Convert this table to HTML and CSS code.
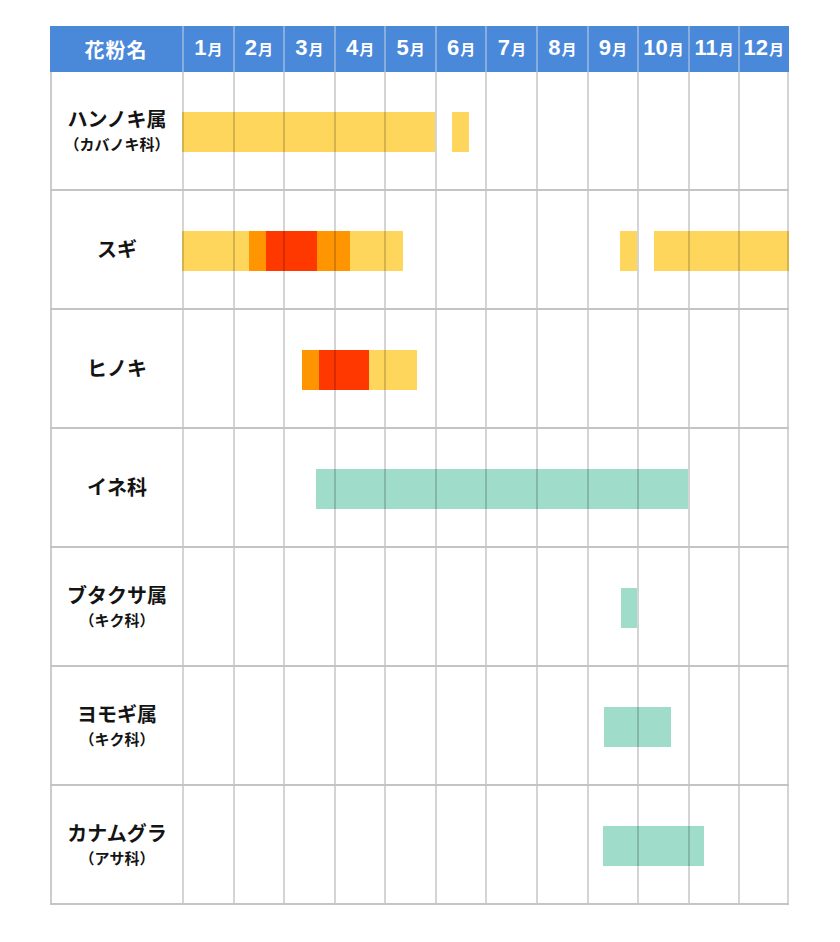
FILE: index.html
```html
<!DOCTYPE html>
<html lang="ja">
<head>
<meta charset="utf-8">
<title>花粉カレンダー</title>
<link rel="stylesheet" href="styles.css">
</head>
<body>
<div class="chart">
  <div class="row head">
    <div class="name">花粉名</div>
    <div class="months">
      <div class="m">1<span class="tsuki">月</span></div>
      <div class="m">2<span class="tsuki">月</span></div>
      <div class="m">3<span class="tsuki">月</span></div>
      <div class="m">4<span class="tsuki">月</span></div>
      <div class="m">5<span class="tsuki">月</span></div>
      <div class="m">6<span class="tsuki">月</span></div>
      <div class="m">7<span class="tsuki">月</span></div>
      <div class="m">8<span class="tsuki">月</span></div>
      <div class="m">9<span class="tsuki">月</span></div>
      <div class="m">10<span class="tsuki">月</span></div>
      <div class="m">11<span class="tsuki">月</span></div>
      <div class="m">12<span class="tsuki">月</span></div>
    </div>
  </div>

  <div class="row body">
    <div class="name"><span class="main">ハンノキ属</span><span class="sub">（カバノキ科）</span></div>
    <div class="months">
      <div class="bars">
        <div class="bar y" style="left:0%;width:41.67%"></div>
        <div class="bar y" style="left:44.5%;width:2.8%"></div>
      </div>
      <div class="c"></div><div class="c"></div><div class="c"></div><div class="c"></div><div class="c"></div><div class="c"></div>
      <div class="c"></div><div class="c"></div><div class="c"></div><div class="c"></div><div class="c"></div><div class="c"></div>
    </div>
  </div>

  <div class="row body">
    <div class="name"><span class="main">スギ</span></div>
    <div class="months">
      <div class="bars">
        <div class="bar y" style="left:0%;width:11.0%"></div>
        <div class="bar o" style="left:11.0%;width:2.8%"></div>
        <div class="bar r" style="left:13.8%;width:8.45%"></div>
        <div class="bar o" style="left:22.25%;width:5.45%"></div>
        <div class="bar y" style="left:27.7%;width:8.75%"></div>
        <div class="bar y" style="left:72.2%;width:2.8%"></div>
        <div class="bar y" style="left:77.8%;width:22.2%"></div>
      </div>
      <div class="c"></div><div class="c"></div><div class="c"></div><div class="c"></div><div class="c"></div><div class="c"></div>
      <div class="c"></div><div class="c"></div><div class="c"></div><div class="c"></div><div class="c"></div><div class="c"></div>
    </div>
  </div>

  <div class="row body">
    <div class="name"><span class="main">ヒノキ</span></div>
    <div class="months">
      <div class="bars">
        <div class="bar o" style="left:19.85%;width:2.75%"></div>
        <div class="bar r" style="left:22.6%;width:8.25%"></div>
        <div class="bar y" style="left:30.85%;width:7.9%"></div>
      </div>
      <div class="c"></div><div class="c"></div><div class="c"></div><div class="c"></div><div class="c"></div><div class="c"></div>
      <div class="c"></div><div class="c"></div><div class="c"></div><div class="c"></div><div class="c"></div><div class="c"></div>
    </div>
  </div>

  <div class="row body">
    <div class="name"><span class="main">イネ科</span></div>
    <div class="months">
      <div class="bars">
        <div class="bar g" style="left:22.1%;width:61.23%"></div>
      </div>
      <div class="c"></div><div class="c"></div><div class="c"></div><div class="c"></div><div class="c"></div><div class="c"></div>
      <div class="c"></div><div class="c"></div><div class="c"></div><div class="c"></div><div class="c"></div><div class="c"></div>
    </div>
  </div>

  <div class="row body">
    <div class="name"><span class="main">ブタクサ属</span><span class="sub">（キク科）</span></div>
    <div class="months">
      <div class="bars">
        <div class="bar g" style="left:72.3%;width:2.7%"></div>
      </div>
      <div class="c"></div><div class="c"></div><div class="c"></div><div class="c"></div><div class="c"></div><div class="c"></div>
      <div class="c"></div><div class="c"></div><div class="c"></div><div class="c"></div><div class="c"></div><div class="c"></div>
    </div>
  </div>

  <div class="row body">
    <div class="name"><span class="main">ヨモギ属</span><span class="sub">（キク科）</span></div>
    <div class="months">
      <div class="bars">
        <div class="bar g" style="left:69.5%;width:11.0%"></div>
      </div>
      <div class="c"></div><div class="c"></div><div class="c"></div><div class="c"></div><div class="c"></div><div class="c"></div>
      <div class="c"></div><div class="c"></div><div class="c"></div><div class="c"></div><div class="c"></div><div class="c"></div>
    </div>
  </div>

  <div class="row body">
    <div class="name"><span class="main">カナムグラ</span><span class="sub">（アサ科）</span></div>
    <div class="months">
      <div class="bars">
        <div class="bar g" style="left:69.35%;width:16.65%"></div>
      </div>
      <div class="c"></div><div class="c"></div><div class="c"></div><div class="c"></div><div class="c"></div><div class="c"></div>
      <div class="c"></div><div class="c"></div><div class="c"></div><div class="c"></div><div class="c"></div><div class="c"></div>
    </div>
  </div>
</div>
</body>
</html>
```

FILE: styles.css
```css
html, body {
  margin: 0;
  padding: 0;
  background: #ffffff;
}

body {
  padding: 26px 0 0 50px;
  font-family: "Noto Sans CJK JP", "Noto Sans", sans-serif;
  color: #141414;
}

.chart {
  width: 739px;
}

.row {
  display: grid;
  grid-template-columns: 132px 607px;
}

.head {
  height: 46px;
  background: #4a88da;
  color: #ffffff;
}

.head .name {
  display: flex;
  align-items: center;
  justify-content: center;
  font-size: 20px;
  font-weight: 700;
  letter-spacing: 1px;
}

.months {
  position: relative;
  display: grid;
  grid-template-columns: repeat(12, 1fr);
}

.head .m {
  box-sizing: border-box;
  border-left: 2px solid rgba(190, 205, 225, 0.55);
  display: flex;
  align-items: baseline;
  justify-content: center;
  font-family: "Liberation Sans", "Noto Sans", sans-serif;
  font-weight: 700;
  font-size: 22px;
  line-height: 44px;
  white-space: nowrap;
}

.head .m:last-child {
  border-right: 2px solid #4a88da;
}

.tsuki {
  font-family: "Noto Sans CJK JP", sans-serif;
  font-size: 15px;
  font-weight: 700;
  line-height: 20px;
  margin-left: 1px;
}

.body {
  height: 119px;
  box-sizing: border-box;
  border-bottom: 2px solid #c4c4c4;
}

.body .name {
  box-sizing: border-box;
  border-left: 2px solid #cccccc;
  display: flex;
  flex-direction: column;
  align-items: center;
  justify-content: center;
  font-weight: 700;
  padding-bottom: 2px;
}

.main {
  font-size: 20px;
  line-height: 28px;
}

.sub {
  font-size: 15px;
  line-height: 21px;
}

.bars {
  position: absolute;
  inset: 0;
  z-index: 0;
}

.bar {
  position: absolute;
  top: 40px;
  height: 40px;
}

.bar.y { background: #ffd65c; }
.bar.o { background: #ff9500; }
.bar.r { background: #ff3800; }
.bar.g { background: #9fdcca; }

.c {
  position: relative;
  z-index: 1;
  box-sizing: border-box;
  border-left: 2px solid rgba(0, 0, 0, 0.17);
}

.c:last-child {
  border-right: 2px solid rgba(0, 0, 0, 0.17);
}
```
